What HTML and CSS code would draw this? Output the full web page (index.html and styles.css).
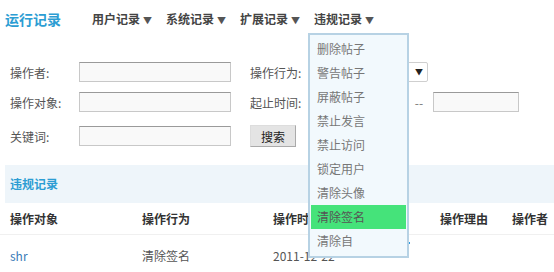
FILE: index.html
```html
<!DOCTYPE html>
<html lang="zh-CN">
<head>
  <meta charset="UTF-8" />
  <title>运行记录</title>
  <link rel="stylesheet" href="styles.css">
</head>
<body>
  <div class="nav">
    <span class="nav-title">运行记录</span>
    <span class="nav-item">用户记录<i class="arrow">▼</i></span>
    <span class="nav-item">系统记录<i class="arrow">▼</i></span>
    <span class="nav-item">扩展记录<i class="arrow">▼</i></span>
    <span class="nav-item menu-host">违规记录<i class="arrow">▼</i>
      <ul class="menu">
        <li>删除帖子</li>
        <li>警告帖子</li>
        <li>屏蔽帖子</li>
        <li>禁止发言</li>
        <li>禁止访问</li>
        <li>锁定用户</li>
        <li>清除头像</li>
        <li class="active">清除签名</li>
        <li>清除自</li>
      </ul>
      <span class="focus-ring"></span>
    </span>
  </div>

  <div class="search">
    <div class="row">
      <label class="lbl">操作者:</label>
      <input class="txt" type="text">
      <label class="lbl lbl2">操作行为:</label>
      <div class="select"><span class="caret">▼</span></div>
    </div>
    <div class="row">
      <label class="lbl">操作对象:</label>
      <input class="txt" type="text">
      <label class="lbl lbl2">起止时间:</label>
      <input class="date" type="text">
      <span class="dash">--</span>
      <input class="date" type="text">
    </div>
    <div class="row row3">
      <label class="lbl">关键词:</label>
      <input class="txt" type="text">
      <button class="btn">搜索</button>
    </div>
  </div>

  <div class="section">违规记录</div>

  <table class="list">
    <thead>
      <tr>
        <th class="c1">操作对象</th>
        <th class="c2">操作行为</th>
        <th class="c3">操作时间</th>
        <th class="c4">操作理由</th>
        <th class="c5">操作者</th>
      </tr>
    </thead>
    <tbody>
      <tr>
        <td><a href="#">shr</a></td>
        <td>清除签名</td>
        <td>2011-12-22</td>
        <td></td>
        <td></td>
      </tr>
    </tbody>
  </table>
</body>
</html>
```

FILE: styles.css
```css
* { box-sizing: border-box; }

body {
  margin: 0;
  background: #fff;
  font-family: "Noto Sans CJK SC", "DejaVu Sans", sans-serif;
  font-size: 12px;
  color: #555;
}

.nav {
  display: flex;
  align-items: center;
  height: 37px;
  padding: 0 0 0 5px;
}

.nav-title {
  color: #2c9dd3;
  font-size: 14px;
  font-weight: bold;
  margin-right: 31px;
}

.nav-item {
  color: #444;
  font-weight: bold;
  width: 74px;
  flex: 0 0 auto;
}

.arrow {
  font-style: normal;
  font-size: 9px;
  margin-left: 3px;
  color: #555;
}

.menu-host {
  position: relative;
}

.menu {
  position: absolute;
  left: -6px;
  top: 23px;
  width: 101px;
  margin: 0;
  padding: 2px 0 3px;
  list-style: none;
  background: #f2f9fd;
  border: 2px solid #b7d2e4;
  z-index: 10;
  font-weight: normal;
}

.menu li {
  height: 24px;
  line-height: 24px;
  padding-left: 6px;
  margin: 0 1px;
  color: #777;
}

.menu li.active {
  background: #45e37a;
  color: #555;
}

.focus-ring {
  position: absolute;
  left: 39px;
  top: 232px;
  width: 57px;
  height: 12px;
  border-top: 2px dashed #2f9be0;
  border-left: 2px dashed #2f9be0;
  z-index: 9;
}

.search {
  padding: 20px 0 0 10px;
}

.row {
  display: flex;
  align-items: center;
  height: 30px;
}

.row3 {
  margin-top: 4px;
}

.lbl {
  width: 69px;
  color: #555;
}

.lbl2 {
  margin-left: 19px;
  width: 60px;
}

.txt {
  width: 152px;
  height: 20px;
  border: 1px solid #c8c8c8;
  border-top-color: #9a9a9a;
  background: #f9f9f9;
  padding: 0;
}

.select {
  width: 118px;
  height: 20px;
  border: 1px solid #cfcfcf;
  border-radius: 2px;
  background: #fff;
  position: relative;
}

.caret {
  position: absolute;
  right: 4px;
  top: 3px;
  font-size: 8px;
  color: #222;
}

.date {
  width: 95px;
  height: 20px;
  border: 1px solid #c8c8c8;
  border-top-color: #9a9a9a;
  background: #f9f9f9;
  padding: 0;
}

.date:last-child {
  width: 86px;
}

.dash {
  width: 28px;
  text-align: center;
  color: #777;
}

.btn {
  width: 46px;
  height: 22px;
  margin-left: 19px;
  font-family: inherit;
  font-size: 12px;
  color: #222;
  background: #e4e4e4;
  border: 1px solid #aaa;
  border-top-color: #ddd;
  border-left-color: #ddd;
  padding: 0;
}

.section {
  margin: 14px 0 0 5px;
  height: 38px;
  line-height: 38px;
  padding-left: 5px;
  background: #eef5fa;
  color: #2c9dd3;
  font-weight: bold;
}

.list {
  width: 100%;
  border-collapse: collapse;
  table-layout: fixed;
}

.list th {
  text-align: left;
  font-weight: bold;
  color: #333;
  height: 31px;
  padding: 0;
  border-bottom: 1px solid #f0f0f0;
}

.list td {
  height: 42px;
  padding: 0;
  color: #555;
}

.list th:first-child,
.list td:first-child {
  padding-left: 10px;
}

.c1 { width: 142px; }
.c2 { width: 131px; }
.c3 { width: 167px; }
.c4 { width: 72px; }

.list a {
  color: #3a7bb8;
  text-decoration: none;
}
```
